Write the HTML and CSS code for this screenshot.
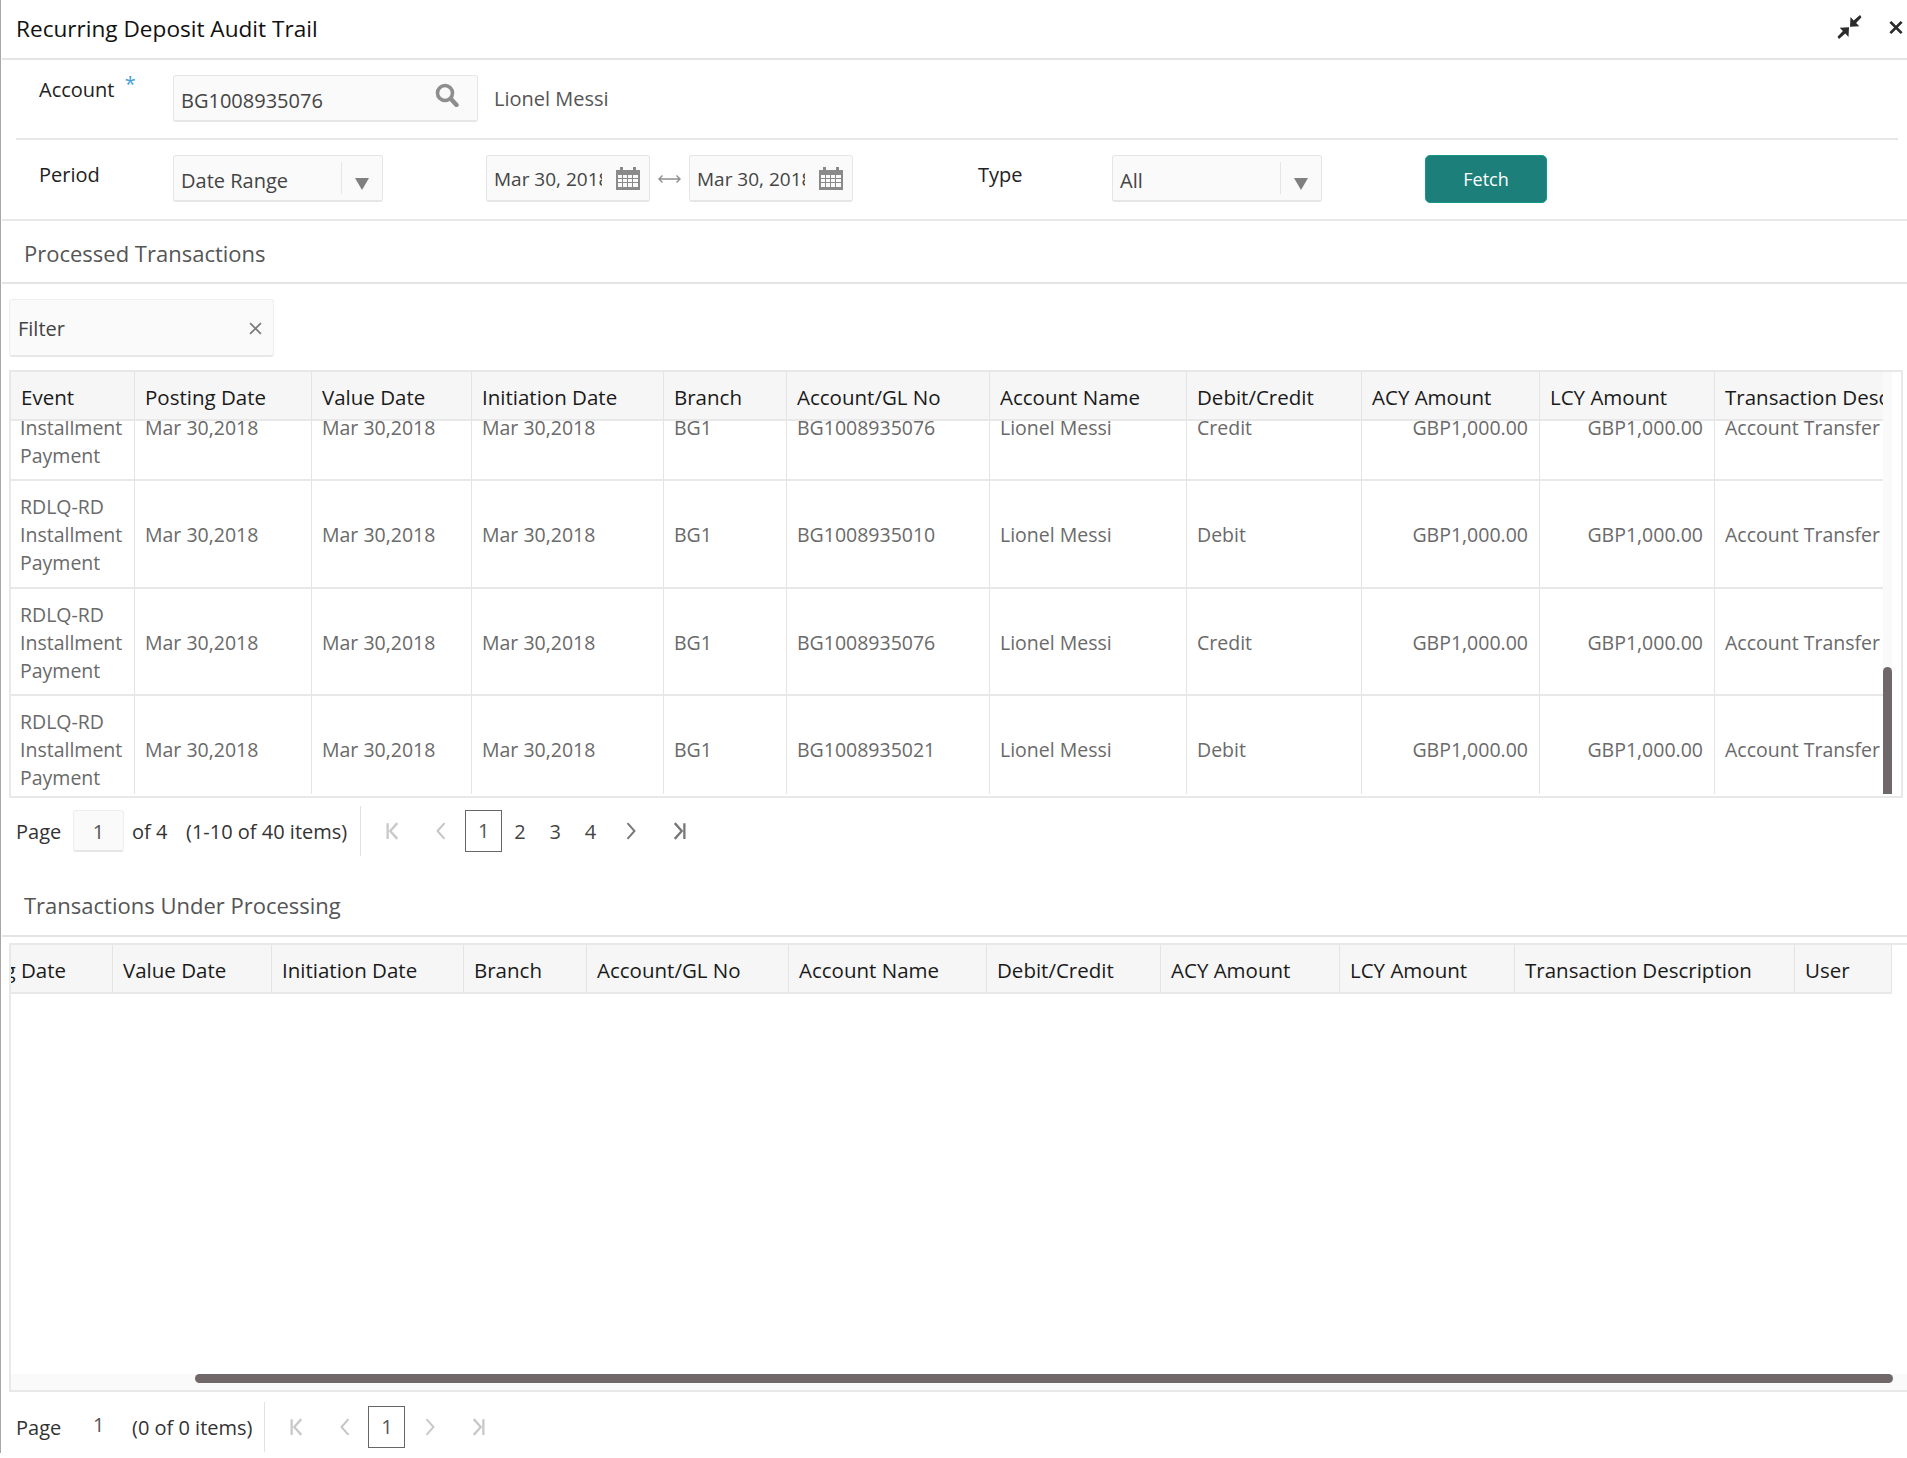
FILE: index.html
```html
<!DOCTYPE html>
<html lang="en">
<head>
<meta charset="utf-8">
<title>Recurring Deposit Audit Trail</title>
<link rel="stylesheet" href="styles.css">
</head>
<body>
<svg class="defs" aria-hidden="true">
  <symbol id="cal" viewBox="0 0 24 24"><path fill="#8a8a8a" d="M4 1h3v3h10V1h3v3h4v20H0V4h4z"/><path fill="#fafafa" d="M2 9h4v3H2zM7 9h4v3H7zM12 9h4v3h-4zM17 9h5v3h-5zM2 13h4v3H2zM7 13h4v3H7zM12 13h4v3h-4zM17 13h5v3h-5zM2 17h4v4H2zM7 17h4v4H7zM12 17h4v4h-4zM17 17h5v4h-5z"/></symbol>
  <symbol id="tri" viewBox="0 0 14 12"><path fill="#808080" d="M0 0h14L7 12z"/></symbol>
  <symbol id="first" viewBox="0 0 16 20"><path fill="none" stroke="currentColor" stroke-width="2.6" d="M3 1v18M14 1L6 10l8 9"/></symbol>
  <symbol id="prev" viewBox="0 0 16 20"><path fill="none" stroke="currentColor" stroke-width="2.2" d="M12 1L4 10l8 9"/></symbol>
  <symbol id="next" viewBox="0 0 16 20"><path fill="none" stroke="currentColor" stroke-width="2.2" d="M4 1l8 9-8 9"/></symbol>
  <symbol id="last" viewBox="0 0 16 20"><path fill="none" stroke="currentColor" stroke-width="2.6" d="M2 1l8 9-8 9M13 1v18"/></symbol>
</svg>
<main class="page">
  <header class="title-bar">
    <h1 class="title">Recurring Deposit Audit Trail</h1>
    <div class="window-actions">
      <svg class="win-icon min" viewBox="0 0 24 24"><path fill="#2b2b2b" d="M22.5 0L24 2.2 18.6 8l3.2 3.2-9.3.5.5-9.6 3.2 3.3zM1.5 24L0 21.8 5.4 16l-3.2-3.2 9.3-.5-.5 9.6-3.2-3.3z"/></svg>
      <svg class="win-icon close" viewBox="0 0 16 16"><path fill="none" stroke="#2b2b2b" stroke-width="3" d="M2 2l12 12M14 2L2 14"/></svg>
    </div>
  </header>

  <section class="form-row account-row">
    <label class="field-label account-label">Account <span class="req">*</span></label>
    <div class="input account-input"><span>BG1008935076</span>
      <svg class="search" viewBox="0 0 24 24"><circle cx="10" cy="10" r="7.5" fill="none" stroke="#8e8e8e" stroke-width="3.6"/><path stroke="#8e8e8e" stroke-width="4.4" stroke-linecap="round" d="M16 16l5.5 6"/></svg>
    </div>
    <span class="account-name">Lionel Messi</span>
  </section>

  <section class="form-row period-row">
    <label class="field-label period-label">Period</label>
    <div class="input select"><span>Date Range</span><i class="sel-div"></i><svg class="tri"><use href="#tri"/></svg></div>
    <div class="input date first-date"><span class="date-text">Mar 30, 2018</span><svg class="cal"><use href="#cal"/></svg></div>
    <svg class="range" viewBox="0 0 24 10"><path fill="none" stroke="#8e8e8e" stroke-width="1.4" d="M1.5 5h21M5 1.5L1.5 5 5 8.5M19 1.5L22.5 5 19 8.5"/></svg>
    <div class="input date"><span class="date-text">Mar 30, 2018</span><svg class="cal"><use href="#cal"/></svg></div>
    <label class="field-label type-label">Type</label>
    <div class="input select"><span>All</span><i class="sel-div"></i><svg class="tri"><use href="#tri"/></svg></div>
    <button class="fetch">Fetch</button>
  </section>

  <h2 class="section-title">Processed Transactions</h2>
  <div class="filter"><span>Filter</span><svg class="filter-x" viewBox="0 0 12 12"><path fill="none" stroke="#7d7d7d" stroke-width="1.7" d="M1 1l10 10M11 1L1 11"/></svg></div>

  <div class="grid-frame grid-one">
    <div class="grid-clip">
      <table class="grid head-table">
        <colgroup><col class="c-event"><col class="c-post"><col class="c-val"><col class="c-init"><col class="c-br"><col class="c-acc"><col class="c-name"><col class="c-dc"><col class="c-acy"><col class="c-lcy"><col class="c-desc"></colgroup>
        <thead><tr><th>Event</th><th>Posting Date</th><th>Value Date</th><th>Initiation Date</th><th>Branch</th><th>Account/GL No</th><th>Account Name</th><th>Debit/Credit</th><th>ACY Amount</th><th>LCY Amount</th><th>Transaction Description</th></tr></thead>
      </table>
      <div class="body-clip">
        <table class="grid body-table">
          <colgroup><col class="c-event"><col class="c-post"><col class="c-val"><col class="c-init"><col class="c-br"><col class="c-acc"><col class="c-name"><col class="c-dc"><col class="c-acy"><col class="c-lcy"><col class="c-desc"></colgroup>
          <tbody>
            <tr><td>RDLQ-RD Installment Payment</td><td>Mar 30,2018</td><td>Mar 30,2018</td><td>Mar 30,2018</td><td>BG1</td><td>BG1008935076</td><td>Lionel Messi</td><td>Credit</td><td class="num">GBP1,000.00</td><td class="num">GBP1,000.00</td><td>Account Transfer</td></tr>
            <tr><td>RDLQ-RD Installment Payment</td><td>Mar 30,2018</td><td>Mar 30,2018</td><td>Mar 30,2018</td><td>BG1</td><td>BG1008935010</td><td>Lionel Messi</td><td>Debit</td><td class="num">GBP1,000.00</td><td class="num">GBP1,000.00</td><td>Account Transfer</td></tr>
            <tr><td>RDLQ-RD Installment Payment</td><td>Mar 30,2018</td><td>Mar 30,2018</td><td>Mar 30,2018</td><td>BG1</td><td>BG1008935076</td><td>Lionel Messi</td><td>Credit</td><td class="num">GBP1,000.00</td><td class="num">GBP1,000.00</td><td>Account Transfer</td></tr>
            <tr><td>RDLQ-RD Installment Payment</td><td>Mar 30,2018</td><td>Mar 30,2018</td><td>Mar 30,2018</td><td>BG1</td><td>BG1008935021</td><td>Lionel Messi</td><td>Debit</td><td class="num">GBP1,000.00</td><td class="num">GBP1,000.00</td><td>Account Transfer</td></tr>
          </tbody>
        </table>
      </div>
    </div>
    <div class="v-track"><div class="v-thumb"></div></div>
  </div>

  <nav class="pager pager-one">
    <span class="p-label">Page</span>
    <span class="p-input">1</span>
    <span class="p-of">of 4</span>
    <span class="p-count">(1-10 of 40 items)</span>
    <i class="p-div"></i>
    <svg class="p-icon off first-i"><use href="#first"/></svg>
    <svg class="p-icon off prev-i"><use href="#prev"/></svg>
    <span class="p-current">1</span>
    <span class="p-num">2</span><span class="p-num">3</span><span class="p-num">4</span>
    <svg class="p-icon on next-i"><use href="#next"/></svg>
    <svg class="p-icon on last-i"><use href="#last"/></svg>
  </nav>

  <h2 class="section-title second-title">Transactions Under Processing</h2>

  <div class="grid-frame grid-two">
    <div class="grid-scroll">
      <table class="grid head-table shifted">
        <colgroup><col class="d-post"><col class="d-val"><col class="d-init"><col class="d-br"><col class="d-acc"><col class="d-name"><col class="d-dc"><col class="d-acy"><col class="d-lcy"><col class="d-desc"><col class="d-user"></colgroup>
        <thead><tr><th>Posting Date</th><th>Value Date</th><th>Initiation Date</th><th>Branch</th><th>Account/GL No</th><th>Account Name</th><th>Debit/Credit</th><th>ACY Amount</th><th>LCY Amount</th><th>Transaction Description</th><th>User</th></tr></thead>
      </table>
    </div>
    <div class="h-track"><div class="h-thumb"></div></div>
  </div>

  <nav class="pager pager-two">
    <span class="p-label">Page</span>
    <span class="p-plain">1</span>
    <span class="p-count">(0 of 0 items)</span>
    <i class="p-div"></i>
    <svg class="p-icon off first-i"><use href="#first"/></svg>
    <svg class="p-icon off prev-i"><use href="#prev"/></svg>
    <span class="p-current">1</span>
    <svg class="p-icon off next-i"><use href="#next"/></svg>
    <svg class="p-icon off last-i"><use href="#last"/></svg>
  </nav>
</main>
</body>
</html>
```

FILE: styles.css
```css
* { box-sizing: border-box; }
html, body { margin: 0; padding: 0; background: #fff; }
body { font-family: "Open Sans", "Noto Sans", "Liberation Sans", sans-serif; font-size: 20px; color: #333; overflow: hidden; }
.defs { width: 0; height: 0; position: absolute; }
.page { width: 1907px; height: 1453px; border-left: 1px solid #a8a8a8; padding-left: 1px; overflow: hidden; }

.title-bar { height: 60px; border-bottom: 2px solid #e4e4e4; display: flex; align-items: center; justify-content: space-between; padding: 0 0 0 14px; }
.title { margin: 0; font-size: 22.6px; font-weight: 400; color: #111; line-height: 1; }
.window-actions { display: flex; align-items: center; gap: 26px; margin-right: 3px; margin-top: -4px; }
.win-icon.min { width: 25px; height: 24px; }
.win-icon.close { width: 16px; height: 15px; }

.form-row { display: flex; }
.account-row { height: 80px; margin-left: 14px; margin-right: 9px; border-bottom: 2px solid #e8e8e8; padding-top: 15px; }
.period-row { height: 81px; border-bottom: 2px solid #e8e8e8; padding: 15px 0 0 37px; }
.field-label { font-size: 20px; color: #222; line-height: 26px; width: 134px; }
.account-label { padding: 0 0 0 23px; width: 157px; position: relative; top: 2px; }
.req { color: #3fa0e0; position: relative; top: -6px; left: 5px; }
.period-label { position: relative; top: 7px; }
.input { height: 47px; background: #fafafa; border: 1px solid #e6e6e6; border-bottom-width: 2px; border-radius: 3px; display: flex; align-items: center; position: relative; padding-left: 7px; color: #444; font-size: 20px; flex: none; }
.account-input { width: 305px; justify-content: space-between; padding-right: 18px; }
.account-input span { position: relative; top: 2px; }
.search { width: 24px; height: 24px; position: relative; top: -3px; }
.account-name { margin-left: 16px; line-height: 47px; color: #555; font-size: 20px; }
.select { width: 210px; }
.select span { position: relative; top: 2px; }
.sel-div { position: absolute; right: 40px; top: 6px; bottom: 6px; width: 1px; background: #e6e6e6; }
.tri { position: absolute; right: 13px; top: 22px; width: 14px; height: 12px; }
.date { width: 164px; margin-left: 0; }
.first-date { margin-left: 103px; }
.date-text { width: 108px; overflow: hidden; white-space: nowrap; font-size: 19px; position: relative; top: 1px; }
.cal { width: 24px; height: 24px; position: absolute; right: 9px; top: 10px; }
.range { width: 25px; height: 10px; flex: none; margin: 19px 7px 0; }
.type-label { width: 134px; margin-left: 125px; position: relative; top: 7px; }
.fetch { width: 122px; height: 48px; margin-left: 103px; background: #1c7f79; border: 1px solid #14988c; border-radius: 5px; color: #fff; font: inherit; font-size: 18px; padding: 0; }

.section-title { margin: 0; height: 63px; line-height: 59px; padding: 3px 0 0 22px; font-size: 22px; font-weight: 400; color: #555; border-bottom: 2px solid #e4e4e4; }
.filter { width: 265px; height: 58px; margin: 15px 0 13px 7px; background: #fafafa; border: 1px solid #eee; border-bottom: 2px solid #e8e8e8; border-radius: 3px; display: flex; align-items: center; justify-content: space-between; padding: 2px 11px 0 8px; color: #444; }
.filter-x { width: 13px; height: 13px; }

.grid-frame { margin-left: 7px; width: 1894px; border: 2px solid #e8e8e8; border-right-width: 1px; position: relative; background: #fff; }
.grid-one { height: 428px; display: flex; border-right: 2px solid #e8e8e8; }
.grid-clip { width: 1872px; overflow: hidden; flex: none; height: 422px; }
.grid { border-collapse: separate; border-spacing: 0; table-layout: fixed; width: 2100px; }
.grid th { height: 49px; background: #f6f6f6; border-right: 1px solid #e4e4e4; border-bottom: 2px solid #e8e8e8; padding: 2px 10px 0; text-align: left; font-weight: 500; color: #1a1a1a; font-size: 20.5px; white-space: nowrap; overflow: hidden; }
.grid td { height: 107.5px; border-right: 1px solid #e4e4e4; border-bottom: 2px solid #e8e8e8; padding: 3px 9px 0 10px; color: #6a6a6a; font-size: 19.5px; line-height: 28px; vertical-align: middle; overflow: hidden; }
.grid td:first-child { padding-left: 9px; padding-right: 4px; }
.grid td.num { text-align: right; white-space: nowrap; padding-right: 11px; }
.body-clip { height: 373px; overflow: hidden; }
.body-table { margin-top: -47.5px; }

.c-event { width: 124px; } .c-post { width: 177px; } .c-val { width: 160px; } .c-init { width: 192px; } .c-br { width: 123px; } .c-acc { width: 203px; } .c-name { width: 197px; } .c-dc { width: 175px; } .c-acy { width: 178px; } .c-lcy { width: 175px; } .c-desc { width: 596px; }

.v-track { background: #fafafa; position: relative; height: 422px; flex: none; width: 9px; }
.v-thumb { position: absolute; top: 295px; left: 0; width: 9px; height: 127px; background: #706868; border-radius: 5px 5px 0 0; }

.pager { display: flex; align-items: center; position: relative; color: #333; }
.pager-one { height: 66px; margin-left: 14px; }
.p-label { width: 57px; }
.p-input { width: 51px; height: 42px; background: #fafafa; border: 1px solid #eee; border-bottom: 2px solid #e6e6e6; border-radius: 3px; text-align: center; line-height: 42px; color: #555; }
.p-of { margin-left: 8px; width: 54px; }
.p-count { white-space: nowrap; }
.p-div { width: 1px; height: 50px; background: #e2e2e2; margin-left: 13px; flex: none; }
.p-icon { width: 14px; height: 18px; flex: none; }
.off { color: #c8c8c8; }
.on { color: #777; }
.first-i { margin-left: 24px; }
.prev-i { margin-left: 35px; color: #c4c4c4; }
.p-current { width: 37px; height: 42px; border: 1px solid #666; text-align: center; line-height: 40px; color: #555; margin-left: 17px; flex: none; }
.p-num { width: 35.3px; text-align: center; flex: none; color: #444; }
.pager-one .next-i { margin-left: 16px; }
.pager-one .last-i { margin-left: 35px; }

.second-title { margin-top: 10px; padding-top: 2px; }

.grid-two { height: 449px; margin-top: 6px; width: 1905px; border-right: 0; border-top-width: 2px; }
.grid-scroll { overflow: hidden; height: 429px; }
.shifted { margin-left: -76px; width: 1957px; }
.d-post { width: 178px; } .d-val { width: 159px; } .d-init { width: 192px; } .d-br { width: 123px; } .d-acc { width: 202px; } .d-name { width: 198px; } .d-dc { width: 174px; } .d-acy { width: 179px; } .d-lcy { width: 175px; } .d-desc { width: 280px; } .d-user { width: 97px; }
.h-track { height: 16px; background: #fafafa; position: relative; }
.h-thumb { position: absolute; left: 184px; top: 0; height: 9px; width: 1698px; background: #706868; border-radius: 5px; }

.pager-two { height: 50px; margin: 10px 0 0 14px; }
.p-plain { width: 45px; padding-left: 20px; color: #555; position: relative; top: -3px; margin-right: 14px; white-space: nowrap; }
.pager-two .p-div { margin-left: 12px; }
.pager-two .p-current { margin-left: 16px; }
.pager-two .next-i { margin-left: 18px; }
.pager-two .last-i { margin-left: 35px; }
```
